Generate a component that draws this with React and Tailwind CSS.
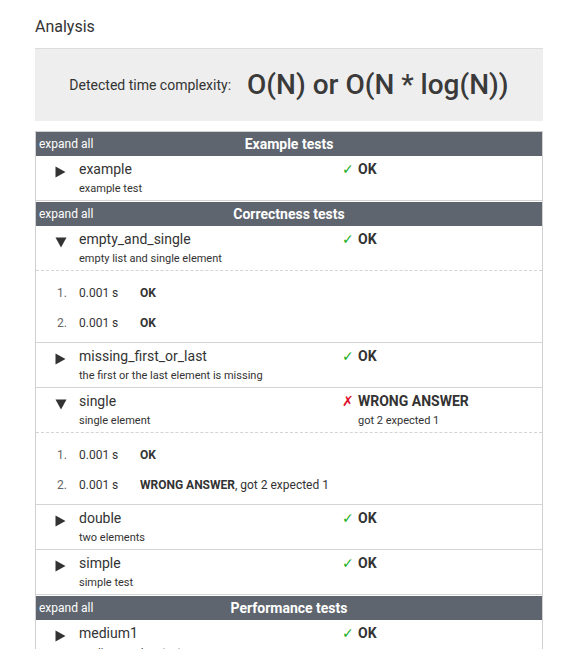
import React from 'react';

const font = { fontFamily: 'Roboto, "Liberation Sans", sans-serif' };

const groups = [
    {
        title: 'Example tests',
        tests: [{ name: 'example', desc: 'example test', ok: true }],
    },
    {
        title: 'Correctness tests',
        tests: [
            {
                name: 'empty_and_single',
                desc: 'empty list and single element',
                ok: true,
                open: true,
                runs: [
                    { time: '0.001 s', result: 'OK' },
                    { time: '0.001 s', result: 'OK' },
                ],
            },
            { name: 'missing_first_or_last', desc: 'the first or the last element is missing', ok: true },
            {
                name: 'single',
                desc: 'single element',
                ok: false,
                detail: 'got 2 expected 1',
                open: true,
                runs: [
                    { time: '0.001 s', result: 'OK' },
                    { time: '0.001 s', result: 'WRONG ANSWER', extra: ', got 2 expected 1' },
                ],
            },
            { name: 'double', desc: 'two elements', ok: true },
            { name: 'simple', desc: 'simple test', ok: true },
        ],
    },
    {
        title: 'Performance tests',
        tests: [
            { name: 'medium1', desc: 'medium random test', ok: true },
            { name: 'large1', desc: 'large random test', ok: true },
        ],
    },
];

const Arrow = ({ open }) =>
    open ? (
        <svg width="12" height="11" viewBox="0 0 12 11" className="mt-[4px]">
            <path d="M0.5 0.5 L11.5 0.5 L6 10.5 Z" fill="#333" />
        </svg>
    ) : (
        <svg width="11" height="12" viewBox="0 0 11 12" className="mt-[3px]">
            <path d="M0.5 0.5 L10.5 6 L0.5 11.5 Z" fill="#333" />
        </svg>
    );

const TestRow = ({ test }) => (
    <>
        <div
            className={`flex h-[45px] border-b border-[#d4d4d4] ${test.open ? 'border-dashed' : 'border-solid'}`}
        >
            <div className="w-[19px] shrink-0" />
            <div className="w-[24px] shrink-0 pt-[7px]">
                <Arrow open={test.open} />
            </div>
            <div className="w-[263px] shrink-0 pt-[4px]">
                <div className="text-[14px] leading-[18px] text-[#333]">{test.name}</div>
                <div className="mt-[4px] text-[11px] leading-[14px] text-[#333]">{test.desc}</div>
            </div>
            <div className="flex pt-[4px]">
                <span
                    className={`w-[16px] text-[14px] leading-[18px] ${test.ok ? 'text-[#22b022]' : 'text-[#e0102a] italic'}`}
                    style={{ fontFamily: '"DejaVu Sans", sans-serif' }}
                >
                    {test.ok ? '✓' : '✗'}
                </span>
                <div>
                    <div className="text-[14px] font-bold leading-[18px] text-[#333]">
                        {test.ok ? 'OK' : 'WRONG ANSWER'}
                    </div>
                    {test.detail && (
                        <div className="mt-[4px] text-[11px] leading-[14px] text-[#333]">{test.detail}</div>
                    )}
                </div>
            </div>
        </div>
        {test.open && (
            <div className="border-b border-[#d4d4d4] pt-[7px] pb-[4px]">
                {test.runs.map((r, i) => (
                    <div key={i} className="flex h-[30px] items-center text-[12px] text-[#333]">
                        <span className="w-[31px] shrink-0 text-right text-[#666]">{i + 1}.</span>
                        <span className="w-[12px] shrink-0" />
                        <span className="w-[61px] shrink-0">{r.time}</span>
                        <span>
                            <b className="font-bold">{r.result}</b>
                            {r.extra}
                        </span>
                    </div>
                ))}
            </div>
        )}
    </>
);

export default function App() {
    return (
        <div className="min-h-screen bg-white px-[35px] pt-[17px]" style={font}>
            <h2 className="text-[16px] leading-[20px] text-[#333]">Analysis</h2>

            <div className="mt-[11px] flex h-[73px] w-[508px] items-center justify-center gap-[16px] border-t border-[#dcdcdc] bg-[#eeeeee]">
                <span className="text-[14px] text-[#333]">Detected time complexity:</span>
                <span className="text-[28px] font-medium text-[#3a3a3a]">O(N) or O(N * log(N))</span>
            </div>

            <div className="mt-[10px] w-[508px] border border-b-0 border-[#d0d0d0]">
                {groups.map((g) => (
                    <div key={g.title} className="pb-[1px]">
                        <div className="relative flex h-[24px] items-center justify-center bg-[#5e656e]">
                            <span className="absolute left-[3px] top-[4px] text-[12px] leading-[16px] text-white">
                                expand all
                            </span>
                            <span className="text-[14px] font-bold text-white">{g.title}</span>
                        </div>
                        {g.tests.map((t) => (
                            <TestRow key={t.name} test={t} />
                        ))}
                    </div>
                ))}
            </div>
        </div>
    );
}
